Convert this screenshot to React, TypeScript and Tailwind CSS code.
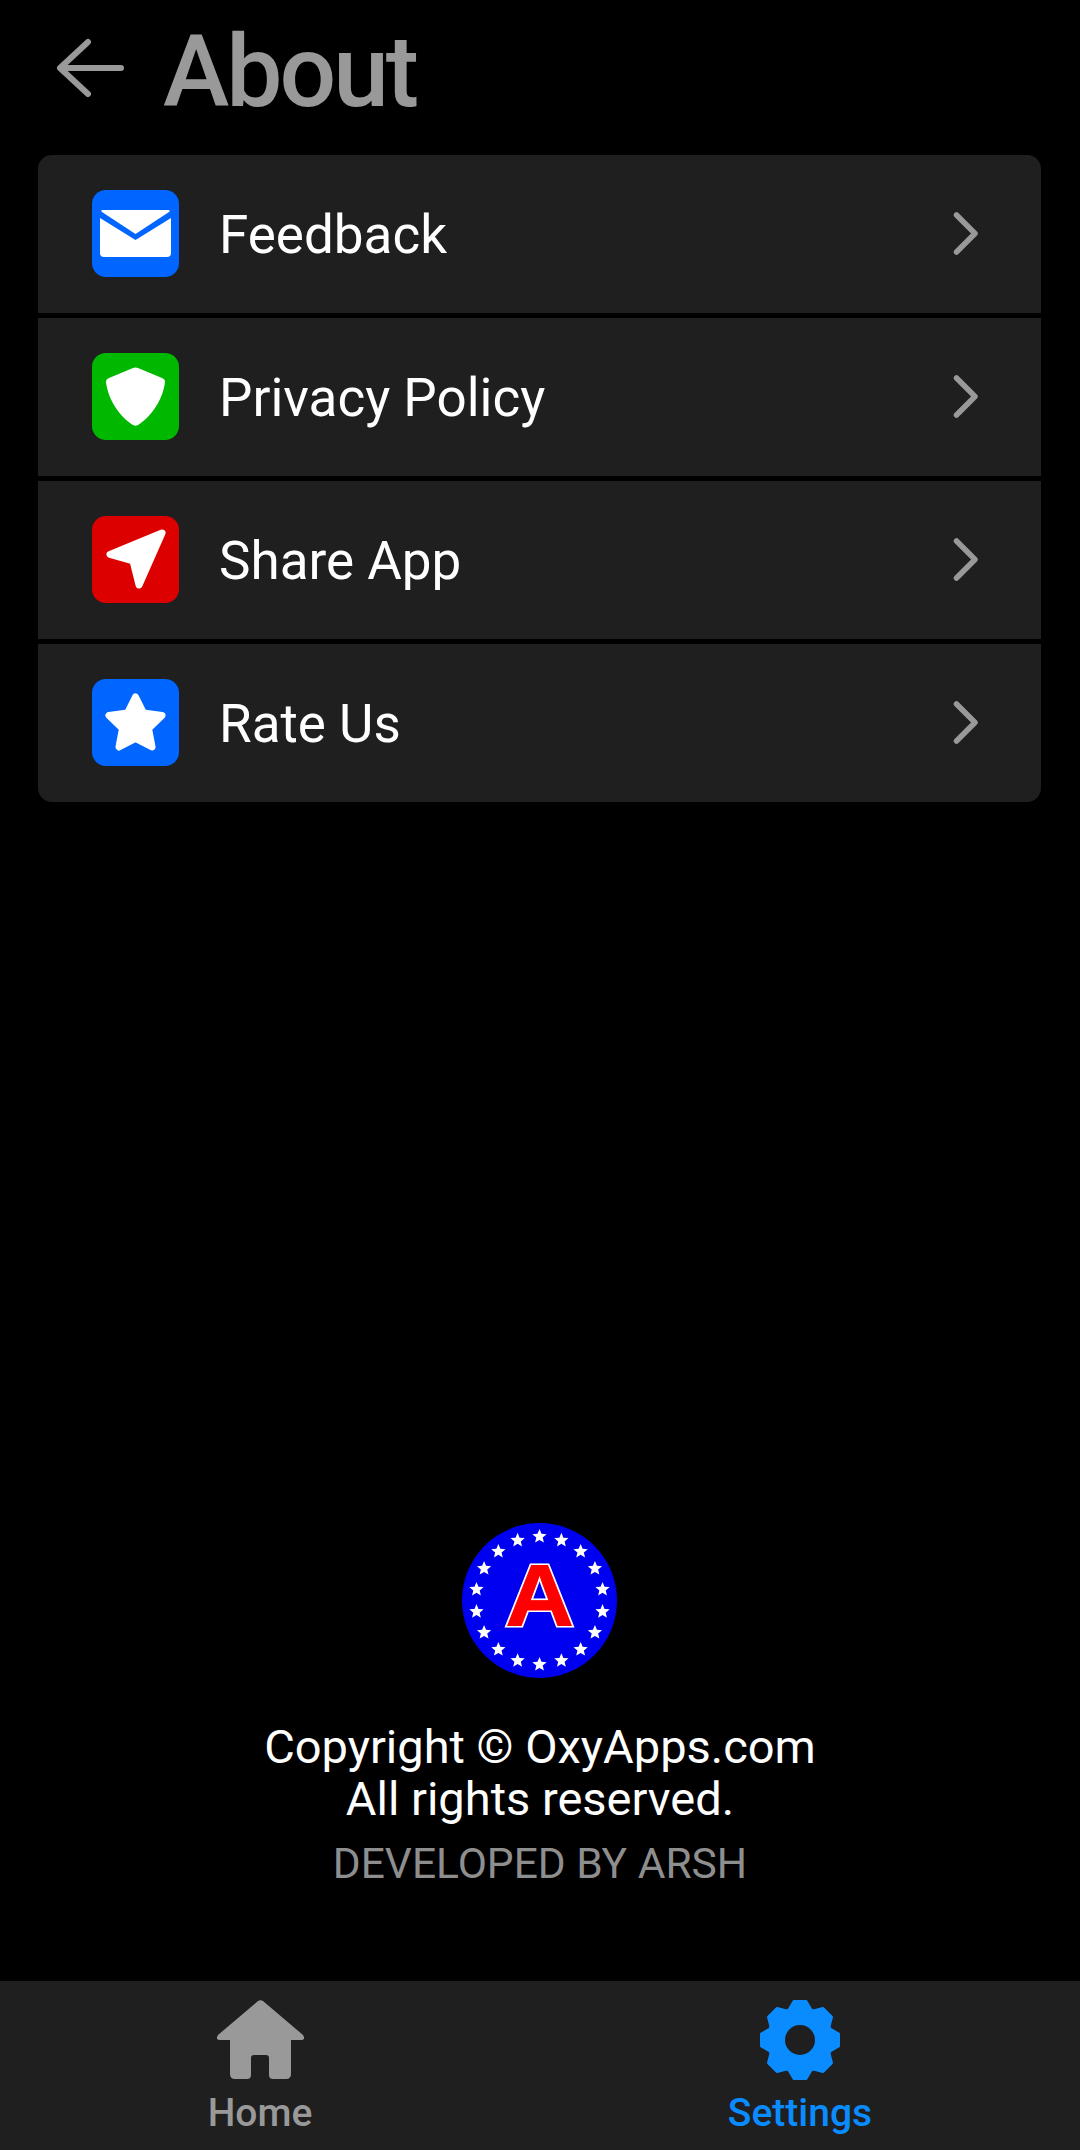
const rows = [
  { label: "Feedback", bg: "bg-[#0066ff]", icon: <MailGlyph /> },
  { label: "Privacy Policy", bg: "bg-[#00b800]", icon: <ShieldGlyph /> },
  { label: "Share App", bg: "bg-[#dd0000]", icon: <SendGlyph /> },
  { label: "Rate Us", bg: "bg-[#0066ff]", icon: <StarGlyph /> },
];

function MailGlyph() {
  return (
    <svg viewBox="0 0 87 87" className="size-full">
      <path d="M8 28 L43.500 50 L79 28 V63 Q79 67 75 67 H12 Q8 67 8 63 Z" fill="#fff" />
      <path d="M11 20 H76 Q79 20 77 22 L43.500 44 L10 22 Q8 20 11 20 Z" fill="#fff" />
    </svg>
  );
}

function ShieldGlyph() {
  return (
    <svg viewBox="0 0 87 87" className="size-full">
      <path
        d="M41 15 Q43.500 14 46 15 L70 25 Q73 26 73 29 C71 46 60 63 46 72 Q43.500 73.500 41 72 C27 63 16 46 14 29 Q14 26 17 25 Z"
        fill="#fff"
      />
    </svg>
  );
}

function SendGlyph() {
  return (
    <svg viewBox="0 0 87 87" className="size-full">
      <path d="M70 17 L18 38.500 L41 45 L47 69 Z" fill="#fff" stroke="#fff" strokeWidth="7" strokeLinejoin="round" />
    </svg>
  );
}

function StarGlyph() {
  return (
    <svg viewBox="0 0 87 87" className="size-full">
      <path
        d="M43.500 18 L51.500 34 L70 36.500 L56.500 49.500 L60 68 L43.500 59.500 L27 68 L30.500 49.500 L17 36.500 L35.500 34 Z"
        fill="#fff"
        stroke="#fff"
        strokeWidth="7"
        strokeLinejoin="round"
      />
    </svg>
  );
}

function starPath(cx: number, cy: number, r: number) {
  const pts: string[] = [];
  for (let i = 0; i < 10; i++) {
    const rad = i % 2 === 0 ? r : r * 0.45;
    const a = (Math.PI / 5) * i - Math.PI / 2;
    pts.push(`${cx + rad * Math.cos(a)},${cy + rad * Math.sin(a)}`);
  }
  return `M${pts.join("L")}Z`;
}

function Logo() {
  const stars = Array.from({ length: 18 }, (_, i) => {
    const a = (i * 20 * Math.PI) / 180;
    return starPath(77.5 + 64 * Math.sin(a), 77.5 - 64 * Math.cos(a), 7.5);
  });
  return (
    <svg viewBox="0 0 155 155" className="size-[155px] mr-px">
      <circle cx="77.5" cy="77.5" r="77.5" fill="#0000f0" />
      {stars.map((d, i) => (
        <path key={i} d={d} fill="#fff" />
      ))}
      <g transform="translate(77.5 102) scale(1.08 1)" className="font-['Liberation_Sans'] font-bold">
        <text textAnchor="middle" fontSize="88" fill="#fff" stroke="#fff" strokeWidth="4" strokeLinejoin="miter">
          A
        </text>
        <text textAnchor="middle" fontSize="88" fill="#ff0000" stroke="#ff0000" strokeWidth="0.8">
          A
        </text>
      </g>
    </svg>
  );
}

function gearPath() {
  const cx = 40;
  const cy = 40;
  const pts: string[] = [];
  for (let i = 0; i < 8; i++) {
    const a = (i * Math.PI) / 4 - Math.PI / 2;
    const ux = Math.cos(a);
    const uy = Math.sin(a);
    const px = -uy;
    const py = ux;
    const add = (r: number, w: number) =>
      pts.push(`${cx + ux * r + px * w},${cy + uy * r + py * w}`);
    add(30, -11);
    add(38.5, -6);
    add(38.5, 6);
    add(30, 11);
  }
  return `M${pts.join("L")}Z`;
}

function HomeIcon() {
  return (
    <svg viewBox="0 0 87 79" className="h-[79px] w-[87px]">
      <path
        d="M41 1 Q43.500 -0.500 46 1 L86 35 Q89 40 84 40 L74 40 L74 74 Q74 79 69 79 L56 79 Q52 79 52 75 L52 58 Q52 55 49 55 L37 55 Q34 55 34 58 L34 75 Q34 79 30 79 L18 79 Q13 79 13 74 L13 40 L3 40 Q-2 40 1 35 Z"
        fill="#999999"
      />
    </svg>
  );
}

function GearIcon() {
  return (
    <svg viewBox="0 0 80 80" className="size-[80px]">
      <path d={gearPath()} fill="#0a8cff" stroke="#0a8cff" strokeWidth="3" strokeLinejoin="round" />
      <circle cx="40" cy="40" r="15" fill="#1f1f1f" />
    </svg>
  );
}

export default function App() {
  return (
    <div className="h-[2150px] w-[1080px] flex flex-col bg-black font-['Roboto',sans-serif] text-white overflow-hidden">
      <header className="h-[155px] shrink-0 flex items-center pl-[55px] pb-[20px]">
        <svg viewBox="0 0 72 60" className="h-[60px] w-[72px]">
          <path d="M66 30 H5 M33 4 L5 30 L33 56" fill="none" stroke="#999999" strokeWidth="6" strokeLinecap="round" strokeLinejoin="round" />
        </svg>
        <h1 className="ml-[36px] mt-[8px] text-[100px] leading-none font-medium text-[#999999] tracking-[-3px]">About</h1>
      </header>

      <main className="flex-1 flex flex-col">
        <ul className="ml-[38px] mr-[39px] flex flex-col gap-[5px] rounded-[14px] overflow-hidden">
          {rows.map((r) => (
            <li key={r.label} className="h-[158px] flex items-center bg-[#1f1f1f] pb-px pl-[54px] pr-[62px]">
              <div className={`size-[87px] rounded-[14px] ${r.bg}`}>{r.icon}</div>
              <span className="ml-[40px] mt-[3px] flex-1 text-[53px] leading-none">{r.label}</span>
              <svg viewBox="0 0 28 46" className="h-[46px] w-[28px]">
                <path d="M5.500 4 L24 22.500 L5.500 41" fill="none" stroke="#999999" strokeWidth="5.5" strokeLinecap="round" strokeLinejoin="round" />
              </svg>
            </li>
          ))}
        </ul>

        <div className="mt-auto pb-[93px] flex flex-col items-center text-center">
          <Logo />
          <p className="mt-[43px] text-[47px] leading-[52px]">
            Copyright © OxyApps.com
            <br />
            All rights reserved.
          </p>
          <p className="mt-[15px] text-[42.5px] leading-[48px] text-[#8e8e8e]">DEVELOPED BY ARSH</p>
        </div>
      </main>

      <nav className="h-[169px] shrink-0 grid grid-cols-[520px_560px] bg-[#1f1f1f] pt-[19px]">
        <div className="flex flex-col items-center">
          <HomeIcon />
          <span className="mt-[11px] text-[39px] leading-[46px] font-medium text-[#999999]">Home</span>
        </div>
        <div className="flex flex-col items-center">
          <GearIcon />
          <span className="mt-[10px] text-[39px] leading-[46px] font-medium text-[#0a8cff]">Settings</span>
        </div>
      </nav>
    </div>
  );
}
